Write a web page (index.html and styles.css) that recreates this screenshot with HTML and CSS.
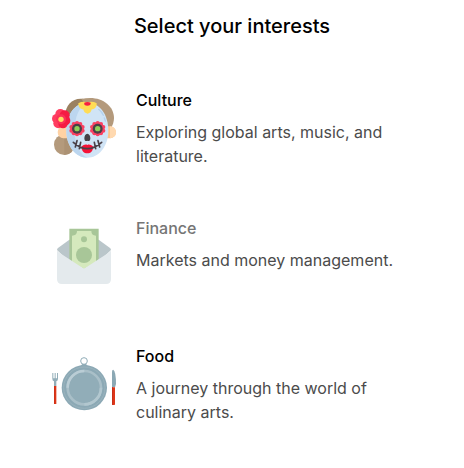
FILE: index.html
```html
<!DOCTYPE html>
<html lang="en">
<head>
<meta charset="utf-8">
<meta name="viewport" content="width=device-width, initial-scale=1">
<title>Select your interests</title>
<link rel="stylesheet" href="styles.css">
</head>
<body>
<main class="page">
  <h1 class="title">Select your interests</h1>
  <ul class="interests">
    <li class="interest">
      <svg class="icon" viewBox="24 18 192 192" aria-hidden="true">
        <circle cx="61" cy="164" r="31" fill="#b49a7c"/>
        <path d="M61 133a31 31 0 0 1 22 9v44a31 31 0 0 1-22 9z" fill="#ac9274"/>
        <path d="M63 114V80C63 46 84 26 110 26c8 0 15 2 21 5L94 114z" fill="#9b8160"/>
        <path d="M112 27c8-2 17-3 27-3 39 0 71 26 71 60 0 12-4 22-9 30h-24z" fill="#b49a7c"/>
        <path d="M72 109H58a17 18 0 0 0 0 36h14z" fill="#ffd2a4"/>
        <path d="M188 109h10a18 18 0 0 1 0 36h-10z" fill="#ffc58c"/>
        <path d="M198 109a18 18 0 0 1 0 36z" fill="#ffd9b0"/>
        <path d="M130 38c38 0 63 36 63 84s-30 81-63 81-63-33-63-81 25-84 63-84z" fill="#d0e4f6"/>
        <path d="M130 38c-38 0-63 36-63 84s30 81 63 81c-22-10-38-38-38-81s15-76 38-84z" fill="#bcd6ef"/>
        <path d="M164 58q10 8 14 18m3 8 3 9" fill="none" stroke="#b4d3ef" stroke-width="4" stroke-linecap="round"/>
        <path d="M103 40q12-7 27-3 16-4 28 3c1 10-6 19-15 18-1 7-5 12-12 13-8-1-12-6-13-13-9 0-16-8-15-18z" fill="#ffdc55"/>
        <path d="M121 38q9-4 19 0c1 6-3 9-10 9s-11-3-9-9z" fill="#f51f43"/>
        <g fill="#f94062">
          <circle cx="99" cy="116" r="20"/>
          <g id="petals">
            <circle cx="99" cy="99" r="6"/><circle cx="109" cy="102" r="6"/><circle cx="116" cy="111" r="6"/><circle cx="116" cy="122" r="6"/><circle cx="109" cy="130" r="6"/><circle cx="99" cy="133" r="6"/><circle cx="89" cy="130" r="6"/><circle cx="82" cy="122" r="6"/><circle cx="82" cy="111" r="6"/><circle cx="89" cy="102" r="6"/>
          </g>
          <circle cx="161" cy="116" r="20"/>
          <use href="#petals" x="62"/>
        </g>
        <circle cx="99" cy="116" r="15" fill="#4a4047"/>
        <circle cx="161" cy="116" r="15" fill="#4a4047"/>
        <circle cx="99" cy="116" r="8" fill="#8ed158"/>
        <circle cx="161" cy="116" r="8" fill="#8ed158"/>
        <path d="M130 131c6 0 9 8 9 14 0 10-7 9-9 7-2 2-9 3-9-7 0-6 3-14 9-14z" fill="#464047"/>
        <path d="M112 170c7-5 12-8 18-5 6-3 11 0 18 5-1 13-8 20-18 20s-17-7-18-20z" fill="#f51237"/>
        <path d="M88 157q42 38 85 0M99 152l-5 19M110 157l-4 19M151 157l4 19M162 152l5 19" fill="none" stroke="#4a4047" stroke-width="5" stroke-linecap="round"/>
        <g fill="#ff3d60">
          <circle cx="49" cy="72" r="15"/><circle cx="38" cy="86" r="14"/><circle cx="43" cy="100" r="15"/>
        </g>
        <g fill="#f51b43">
          <circle cx="62" cy="76" r="15"/><circle cx="65" cy="92" r="14"/><circle cx="57" cy="101" r="14"/>
        </g>
        <circle cx="51" cy="88" r="15" fill="#fb3258"/>
        <circle cx="51" cy="88" r="8" fill="#ffdc64"/>
      </svg>
      <div class="text">
        <a class="name" href="#culture">Culture</a>
        <p class="description">Exploring global arts, music, and literature.</p>
      </div>
    </li>
    <li class="interest">
      <svg class="icon" viewBox="24 18 192 192" aria-hidden="true">
        <path d="M39 96q0-4 4-7l33-24h88l33 24q4 3 4 7l-37 36H76z" fill="#bac6ca"/>
        <path d="M76 32h88v95l-44 25-44-25z" fill="#a8c698"/>
        <path d="M99 39h43q0 14 14 14v79l-36 20-36-20V53q15 0 15-14z" fill="#d5e9bd"/>
        <circle cx="120" cy="64" r="9" fill="#a8c698"/>
        <circle cx="120" cy="111" r="24" fill="#a8c698"/>
        <path d="M39 96q1 4 5 7l76 49 76-49q4-3 5-7v87q0 15-15 15H54q-15 0-15-15z" fill="#e4eaed"/>
      </svg>
      <div class="text">
        <a class="name name-muted" href="#finance">Finance</a>
        <p class="description">Markets and money management.</p>
      </div>
    </li>
    <li class="interest">
      <svg class="icon" viewBox="24 18 192 192" aria-hidden="true">
        <circle cx="120" cy="45" r="10" fill="none" stroke="#91adb8" stroke-width="3"/>
        <path d="M102 62q10-1 13-8h11q3 7 13 8z" fill="#91adb8"/>
        <circle cx="121" cy="125" r="68" fill="#8ca9b5"/>
        <circle cx="121" cy="125" r="62" fill="none" stroke="#9ab3bd" stroke-width="3"/>
        <circle cx="121" cy="125" r="50" fill="#91adb8" stroke="#a9bfc8" stroke-width="8"/>
        <path d="M71 125a50 50 0 0 1 50-50" fill="none" stroke="#bacdd5" stroke-width="8"/>
        <path d="M171 125a50 50 0 0 1-50 50" fill="none" stroke="#b2c7cf" stroke-width="8"/>
        <path d="M25 81v17q0 7 5 8v15h7v-15q5-1 5-8V81h-3v16h-4V81h-3v16h-4V81z" fill="#91adb8"/>
        <path d="M30 120h7v54h-7z" fill="#de3618"/>
        <path d="M30 120h2v54h-2z" fill="#c72f18"/>
        <path d="M204 124V77q0-6 4-6 8 6 8 43l-3 10z" fill="#8ba8b4"/>
        <path d="M204 124h9v51q0 2-2 2h-5q-2 0-2-2z" fill="#de3618"/>
        <path d="M204 124h3v53h-1q-2 0-2-2z" fill="#c72f18"/>
      </svg>
      <div class="text">
        <a class="name" href="#food">Food</a>
        <p class="description">A journey through the world of culinary arts.</p>
      </div>
    </li>
  </ul>
</main>
</body>
</html>
```

FILE: styles.css
```css
body {
  margin: 0;
  background: #fff;
  color: #000;
  font-family: Inter, "Liberation Sans", sans-serif;
  font-size: 16px;
  line-height: 24px;
}

.page {
  padding: 12px 52px 44px;
}

.title {
  margin: 0 0 48px;
  font-size: 20px;
  font-weight: 500;
  line-height: 28px;
  text-align: center;
}

.interests {
  display: grid;
  gap: 48px;
  margin: 0;
  padding: 0;
  list-style: none;
}

.interest {
  display: flex;
  gap: 20px;
  min-height: 80px;
}

.icon {
  flex: none;
  width: 64px;
  height: 64px;
  margin: 8px 0;
}

.text {
  flex: 1;
}

.name {
  display: block;
  margin-bottom: 8px;
  color: #000;
  font-weight: 500;
  text-decoration: none;
}

.name-muted,
.name:hover {
  color: #757575;
}

.description {
  margin: 0;
  color: #4b4b4b;
}
```
